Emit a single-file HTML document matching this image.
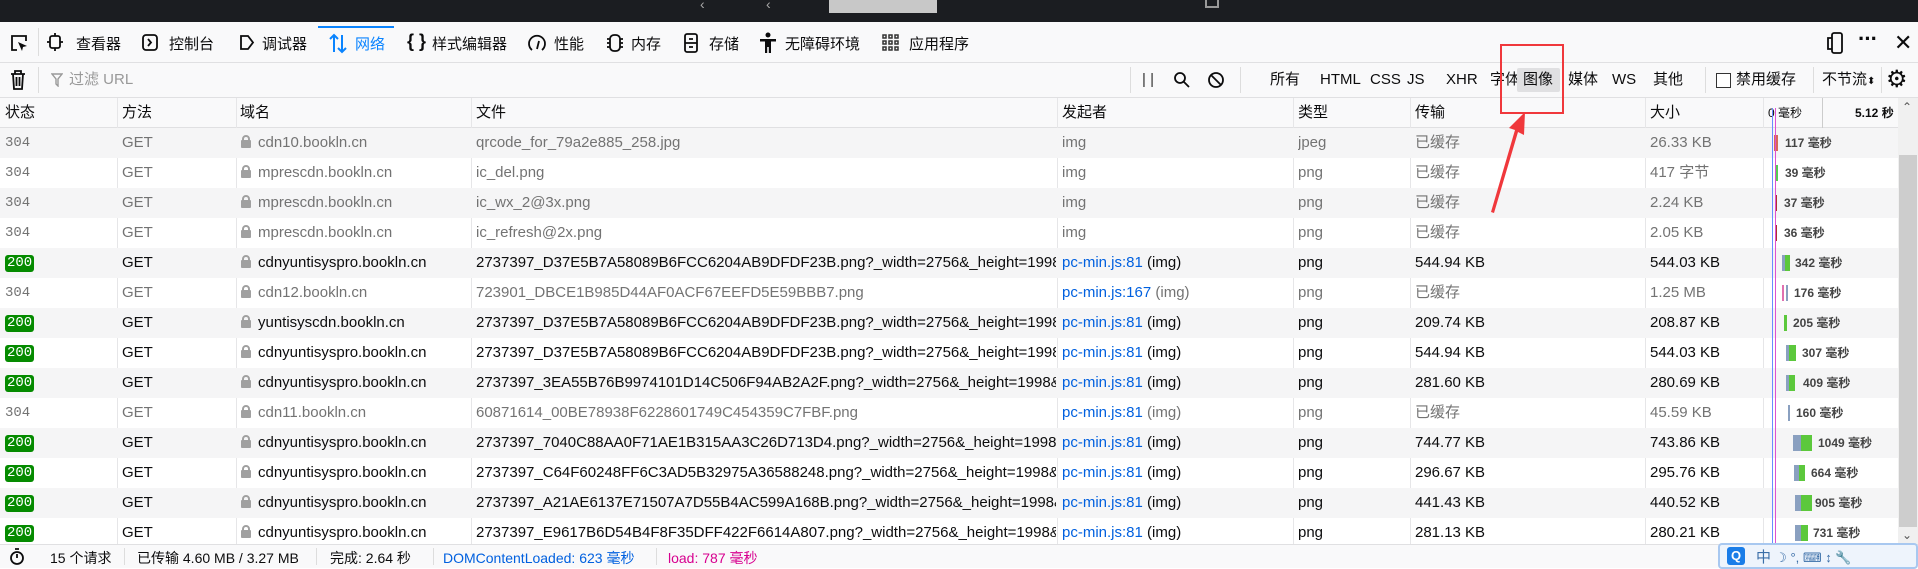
<!DOCTYPE html>
<html><head><meta charset="utf-8"><style>
*{box-sizing:border-box;margin:0;padding:0}
body{width:1918px;height:568px;overflow:hidden;background:#fff;font-family:"Liberation Sans","Noto Sans CJK SC",sans-serif;font-size:15px;color:#0c0c0d;position:relative}
.abs{position:absolute;white-space:nowrap}
#top{position:absolute;left:0;top:0;width:1918px;height:22px;background:#1b1d21}
#tb{position:absolute;top:22px;left:0;width:1918px;height:41px;background:#f9f9fa;border-bottom:1px solid #e0e0e2}
#fr{position:absolute;top:63px;left:0;width:1918px;height:35px;background:#f9f9fa;border-bottom:1px solid #e0e0e2}
#fr .t{top:7px;line-height:20px}
#hd{position:absolute;top:98px;left:0;width:1898px;height:30px;background:#f9f9fa;border-bottom:1px solid #e0e0e2}
.row{position:absolute;left:0;width:1898px;height:30px}
.row:nth-child(odd){background:#f5f5f6}
.c{position:absolute;top:0;height:30px;line-height:30px;white-space:nowrap;overflow:hidden}
.g{color:#737373}
.b200{display:inline-block;background:#058b00;color:#fff;font-family:"Liberation Mono",monospace;font-size:14px;line-height:17px;padding:0 2px;border-radius:3px;vertical-align:middle}
.vl{position:absolute;top:98px;height:446px;width:1px;background:#e6e6e8}
.lock{display:inline-block;width:10px;height:13px;position:relative;margin-right:7px;vertical-align:-1px}
.lock:before{content:"";position:absolute;left:1px;top:0;width:8px;height:9px;border:2px solid #a0a0a0;border-radius:4px 4px 0 0;box-sizing:border-box}
.lock:after{content:"";position:absolute;left:0;top:5px;width:10px;height:8px;background:#a0a0a0;border-radius:1px}
.bar{position:absolute;top:7px;height:16px}
.wl{position:absolute;font-size:12px;font-weight:bold;color:#444;line-height:30px}
.ic{stroke:#0c0c0d;fill:none;stroke-width:1.8}
#sb{position:absolute;top:544px;left:0;width:1918px;height:24px;background:#f9f9fa;border-top:1px solid #e0e0e2;font-size:14px}
</style></head><body>
<div id="top">
 <div class="abs" style="left:829px;top:0;width:108px;height:13px;background:#c8c8c8"></div>
 <div class="abs" style="left:700px;top:0;color:#aaa;font-size:14px;line-height:8px">‹</div>
 <div class="abs" style="left:766px;top:0;color:#aaa;font-size:14px;line-height:8px">‹</div>
 <div class="abs" style="left:1205px;top:0;width:14px;height:8px;border:2px solid #999;border-top:0"></div>
</div>
<div id="tb">
 <div class="abs" style="left:318px;top:4px;width:76px;height:2px;background:#0a84ff"></div>
 <svg class="abs" style="left:10px;top:12px" width="18" height="18"><path class="ic" d="M7 16H2V2h14v5"/><path d="M8 8l9 4-4 1-1 4z" fill="#0c0c0d"/></svg>
 <div class="abs" style="left:38px;top:6px;width:1px;height:28px;background:#ddd"></div>
 <svg class="abs" style="left:47px;top:11px" width="16" height="18"><rect class="ic" x="3" y="3" width="10" height="12" rx="2"/><path class="ic" d="M8 0v3M8 15v3M0 9h3M13 9h3"/></svg>
 <div class="abs" style="left:76px;top:11px">查看器</div>
 <svg class="abs" style="left:142px;top:12px" width="16" height="17"><rect class="ic" x="1" y="1" width="14" height="15" rx="3"/><path class="ic" d="M6 5l3 3.5L6 12"/></svg>
 <div class="abs" style="left:169px;top:11px">控制台</div>
 <svg class="abs" style="left:239px;top:12px" width="16" height="17"><path class="ic" d="M2 2h7l5 6.5L9 15H2z"/></svg>
 <div class="abs" style="left:262px;top:11px">调试器</div>
 <svg class="abs" style="left:327px;top:10px" width="22" height="22"><path d="M7 20V3M3 7l4-4 4 4M15 3v17M11 16l4 4 4-4" stroke="#0a84ff" stroke-width="2" fill="none"/></svg>
 <div class="abs" style="left:355px;top:11px;color:#0a84ff">网络</div>
 <div class="abs" style="left:407px;top:9px;font-size:18px;font-weight:bold">{ }</div>
 <div class="abs" style="left:432px;top:11px">样式编辑器</div>
 <svg class="abs" style="left:527px;top:11px" width="20" height="20"><path class="ic" d="M5 17A8 8 0 1 1 15 17"/><path class="ic" d="M10 16l2-8"/></svg>
 <div class="abs" style="left:554px;top:11px">性能</div>
 <svg class="abs" style="left:605px;top:11px" width="20" height="20"><rect class="ic" x="5" y="2" width="10" height="16" rx="4"/><path class="ic" d="M2 6h3M2 10h3M2 14h3M15 6h3M15 10h3M15 14h3"/></svg>
 <div class="abs" style="left:631px;top:11px">内存</div>
 <svg class="abs" style="left:683px;top:11px" width="16" height="20"><rect class="ic" x="2" y="1" width="12" height="18" rx="2"/><path class="ic" d="M2 10h12M6 6h4M6 14h4"/></svg>
 <div class="abs" style="left:709px;top:11px">存储</div>
 <svg class="abs" style="left:759px;top:10px" width="18" height="22"><circle cx="9" cy="3" r="2.5" fill="#0c0c0d"/><path d="M1 7h16v2.5h-5V21H9.8v-6h-1.6v6H6V9.5H1z" fill="#0c0c0d"/></svg>
 <div class="abs" style="left:785px;top:11px">无障碍环境</div>
 <svg class="abs" style="left:882px;top:12px" width="18" height="18"><g fill="none" stroke="#333" stroke-width="1.5"><rect x="1" y="1" width="3" height="3"/><rect x="7" y="1" width="3" height="3"/><rect x="13" y="1" width="3" height="3"/><rect x="1" y="7" width="3" height="3"/><rect x="7" y="7" width="3" height="3"/><rect x="13" y="7" width="3" height="3"/><rect x="1" y="13" width="3" height="3"/><rect x="7" y="13" width="3" height="3"/><rect x="13" y="13" width="3" height="3"/></g></svg>
 <div class="abs" style="left:909px;top:11px">应用程序</div>
 <svg class="abs" style="left:1827px;top:10px" width="16" height="22"><rect class="ic" x="5" y="1" width="10" height="20" rx="2"/><path class="ic" d="M5 6H1v11h4"/></svg>
 <div class="abs" style="left:1858px;top:4px;font-size:22px;font-weight:bold;letter-spacing:-1px">···</div>
 <div class="abs" style="left:1894px;top:8px;font-size:22px">✕</div>
</div>
<div id="fr">
 <svg class="abs" style="left:10px;top:7px" width="16" height="20"><path class="ic" d="M1 4h14M5 4V1h6v3M3 4l1 15h8l1-15M6.5 7v9M9.5 7v9"/></svg>
 <div class="abs" style="left:38px;top:4px;width:1px;height:26px;background:#ddd"></div>
 <svg class="abs" style="left:51px;top:10px" width="12" height="14"><path d="M1 1h10L7 6v7L5 11V6z" fill="none" stroke="#999" stroke-width="1.4"/></svg>
 <div class="abs t" style="left:69px;color:#999">过滤 URL</div>
 <div class="abs" style="left:1130px;top:4px;width:1px;height:26px;background:#ddd"></div>
 <div class="abs t" style="left:1142px;color:#333">| |</div>
 <svg class="abs" style="left:1173px;top:8px" width="18" height="18"><circle class="ic" cx="7" cy="7" r="5"/><path class="ic" d="M11 11l5 5" stroke-width="2.4"/></svg>
 <svg class="abs" style="left:1207px;top:8px" width="18" height="18"><circle class="ic" cx="9" cy="9" r="7" stroke-width="2.4"/><path class="ic" d="M4 4l10 10" stroke-width="2.4"/></svg>
 <div class="abs" style="left:1240px;top:4px;width:1px;height:26px;background:#ddd"></div>
 <div class="abs t" style="left:1270px">所有</div>
 <div class="abs t" style="left:1320px">HTML</div>
 <div class="abs t" style="left:1370px">CSS</div>
 <div class="abs t" style="left:1407px">JS</div>
 <div class="abs t" style="left:1446px">XHR</div>
 <div class="abs t" style="left:1490px">字体</div>
 <div class="abs" style="left:1517px;top:5px;width:43px;height:24px;background:#e0e0e2;border-radius:2px"></div>
 <div class="abs t" style="left:1523px">图像</div>
 <div class="abs t" style="left:1568px">媒体</div>
 <div class="abs t" style="left:1612px">WS</div>
 <div class="abs t" style="left:1653px">其他</div>
 <div class="abs" style="left:1705px;top:4px;width:1px;height:26px;background:#ddd"></div>
 <div class="abs" style="left:1716px;top:10px;width:15px;height:15px;border:1px solid #333;background:#fff"></div>
 <div class="abs t" style="left:1736px">禁用缓存</div>
 <div class="abs" style="left:1813px;top:4px;width:1px;height:26px;background:#ddd"></div>
 <div class="abs t" style="left:1822px">不节流<span style="font-size:10px">⬍</span></div>
 <div class="abs" style="left:1881px;top:4px;width:1px;height:26px;background:#ddd"></div>
 <div class="abs" style="left:1886px;top:2px;font-size:24px">⚙</div>
</div>
<div id="hd">
 <div class="c" style="left:5px">状态</div>
 <div class="c" style="left:122px">方法</div>
 <div class="c" style="left:240px">域名</div>
 <div class="c" style="left:476px">文件</div>
 <div class="c" style="left:1062px">发起者</div>
 <div class="c" style="left:1298px">类型</div>
 <div class="c" style="left:1415px">传输</div>
 <div class="c" style="left:1650px">大小</div>
 <div class="c" style="left:1768px;font-size:12px">0 毫秒</div>
 <div class="c" style="left:1855px;font-size:12px;font-weight:bold">5.12 秒</div>
</div>
<div class="vl" style="left:117px"></div><div class="vl" style="left:236px"></div><div class="vl" style="left:471px"></div><div class="vl" style="left:1057px"></div><div class="vl" style="left:1293px"></div><div class="vl" style="left:1410px"></div><div class="vl" style="left:1645px"></div><div class="vl" style="left:1763px"></div>
<div class="vl" style="left:1822px;height:30px;background:#ccc"></div>
<div id="rows" style="position:absolute;left:0;top:0">
<div class="row g" style="top:128px"><div class="c" style="left:5px;font-family:'Liberation Mono',monospace;font-size:14px">304</div><div class="c" style="left:122px">GET</div><div class="c" style="left:241px;width:228px"><span class="lock"></span>cdn10.bookln.cn</div><div class="c" style="left:476px;width:578px">qrcode_for_79a2e885_258.jpg</div><div class="c" style="left:1062px">img</div><div class="c" style="left:1298px">jpeg</div><div class="c" style="left:1415px">已缓存</div><div class="c" style="left:1650px">26.33 KB</div><div class="bar" style="left:1774px;width:4px;background:#d7695a"></div><div class="wl" style="left:1785px">117 毫秒</div></div>
<div class="row g" style="top:158px"><div class="c" style="left:5px;font-family:'Liberation Mono',monospace;font-size:14px">304</div><div class="c" style="left:122px">GET</div><div class="c" style="left:241px"><span class="lock"></span>mprescdn.bookln.cn</div><div class="c" style="left:476px">ic_del.png</div><div class="c" style="left:1062px">img</div><div class="c" style="left:1298px">png</div><div class="c" style="left:1415px">已缓存</div><div class="c" style="left:1650px">417 字节</div><div class="bar" style="left:1776px;width:2px;background:#5c5"></div><div class="wl" style="left:1785px">39 毫秒</div></div>
<div class="row g" style="top:188px"><div class="c" style="left:5px;font-family:'Liberation Mono',monospace;font-size:14px">304</div><div class="c" style="left:122px">GET</div><div class="c" style="left:241px"><span class="lock"></span>mprescdn.bookln.cn</div><div class="c" style="left:476px">ic_wx_2@3x.png</div><div class="c" style="left:1062px">img</div><div class="c" style="left:1298px">png</div><div class="c" style="left:1415px">已缓存</div><div class="c" style="left:1650px">2.24 KB</div><div class="bar" style="left:1776px;width:1px;background:#a33"></div><div class="wl" style="left:1784px">37 毫秒</div></div>
<div class="row g" style="top:218px"><div class="c" style="left:5px;font-family:'Liberation Mono',monospace;font-size:14px">304</div><div class="c" style="left:122px">GET</div><div class="c" style="left:241px"><span class="lock"></span>mprescdn.bookln.cn</div><div class="c" style="left:476px">ic_refresh@2x.png</div><div class="c" style="left:1062px">img</div><div class="c" style="left:1298px">png</div><div class="c" style="left:1415px">已缓存</div><div class="c" style="left:1650px">2.05 KB</div><div class="bar" style="left:1776px;width:1px;background:#a33"></div><div class="wl" style="left:1784px">36 毫秒</div></div>
<div class="row" style="top:248px"><div class="c" style="left:5px"><span class="b200">200</span></div><div class="c" style="left:122px">GET</div><div class="c" style="left:241px"><span class="lock"></span>cdnyuntisyspro.bookln.cn</div><div class="c" style="left:476px;width:580px">2737397_D37E5B7A58089B6FCC6204AB9DFDF23B.png?_width=2756&amp;_height=1998&amp;auth</div><div class="c" style="left:1062px"><span style="color:#0060df">pc-min.js:81</span> (img)</div><div class="c" style="left:1298px">png</div><div class="c" style="left:1415px">544.94 KB</div><div class="c" style="left:1650px">544.03 KB</div><div class="bar" style="left:1782px;width:3px;background:#8aa0c0"></div><div class="bar" style="left:1785px;width:5px;background:#5cc83c"></div><div class="wl" style="left:1795px">342 毫秒</div></div>
<div class="row g" style="top:278px"><div class="c" style="left:5px;font-family:'Liberation Mono',monospace;font-size:14px">304</div><div class="c" style="left:122px">GET</div><div class="c" style="left:241px"><span class="lock"></span>cdn12.bookln.cn</div><div class="c" style="left:476px">723901_DBCE1B985D44AF0ACF67EEFD5E59BBB7.png</div><div class="c" style="left:1062px"><span style="color:#0060df">pc-min.js:167</span> (img)</div><div class="c" style="left:1298px">png</div><div class="c" style="left:1415px">已缓存</div><div class="c" style="left:1650px">1.25 MB</div><div class="bar" style="left:1782px;width:2px;background:#e070b0"></div><div class="bar" style="left:1786px;width:2px;background:#8aa0c0"></div><div class="wl" style="left:1794px">176 毫秒</div></div>
<div class="row" style="top:308px"><div class="c" style="left:5px"><span class="b200">200</span></div><div class="c" style="left:122px">GET</div><div class="c" style="left:241px"><span class="lock"></span>yuntisyscdn.bookln.cn</div><div class="c" style="left:476px;width:580px">2737397_D37E5B7A58089B6FCC6204AB9DFDF23B.png?_width=2756&amp;_height=1998&amp;x-oss</div><div class="c" style="left:1062px"><span style="color:#0060df">pc-min.js:81</span> (img)</div><div class="c" style="left:1298px">png</div><div class="c" style="left:1415px">209.74 KB</div><div class="c" style="left:1650px">208.87 KB</div><div class="bar" style="left:1784px;width:3px;background:#5cc83c"></div><div class="wl" style="left:1793px">205 毫秒</div></div>
<div class="row" style="top:338px"><div class="c" style="left:5px"><span class="b200">200</span></div><div class="c" style="left:122px">GET</div><div class="c" style="left:241px"><span class="lock"></span>cdnyuntisyspro.bookln.cn</div><div class="c" style="left:476px;width:580px">2737397_D37E5B7A58089B6FCC6204AB9DFDF23B.png?_width=2756&amp;_height=1998&amp;auth</div><div class="c" style="left:1062px"><span style="color:#0060df">pc-min.js:81</span> (img)</div><div class="c" style="left:1298px">png</div><div class="c" style="left:1415px">544.94 KB</div><div class="c" style="left:1650px">544.03 KB</div><div class="bar" style="left:1786px;width:3px;background:#8aa0c0"></div><div class="bar" style="left:1789px;width:7px;background:#5cc83c"></div><div class="wl" style="left:1802px">307 毫秒</div></div>
<div class="row" style="top:368px"><div class="c" style="left:5px"><span class="b200">200</span></div><div class="c" style="left:122px">GET</div><div class="c" style="left:241px"><span class="lock"></span>cdnyuntisyspro.bookln.cn</div><div class="c" style="left:476px;width:580px">2737397_3EA55B76B9974101D14C506F94AB2A2F.png?_width=2756&amp;_height=1998&amp;auth</div><div class="c" style="left:1062px"><span style="color:#0060df">pc-min.js:81</span> (img)</div><div class="c" style="left:1298px">png</div><div class="c" style="left:1415px">281.60 KB</div><div class="c" style="left:1650px">280.69 KB</div><div class="bar" style="left:1786px;width:3px;background:#8aa0c0"></div><div class="bar" style="left:1789px;width:6px;background:#5cc83c"></div><div class="wl" style="left:1803px">409 毫秒</div></div>
<div class="row g" style="top:398px"><div class="c" style="left:5px;font-family:'Liberation Mono',monospace;font-size:14px">304</div><div class="c" style="left:122px">GET</div><div class="c" style="left:241px"><span class="lock"></span>cdn11.bookln.cn</div><div class="c" style="left:476px">60871614_00BE78938F6228601749C454359C7FBF.png</div><div class="c" style="left:1062px"><span style="color:#0060df">pc-min.js:81</span> (img)</div><div class="c" style="left:1298px">png</div><div class="c" style="left:1415px">已缓存</div><div class="c" style="left:1650px">45.59 KB</div><div class="bar" style="left:1788px;width:2px;background:#8aa0c0"></div><div class="wl" style="left:1796px">160 毫秒</div></div>
<div class="row" style="top:428px"><div class="c" style="left:5px"><span class="b200">200</span></div><div class="c" style="left:122px">GET</div><div class="c" style="left:241px"><span class="lock"></span>cdnyuntisyspro.bookln.cn</div><div class="c" style="left:476px;width:580px">2737397_7040C88AA0F71AE1B315AA3C26D713D4.png?_width=2756&amp;_height=1998&amp;auth</div><div class="c" style="left:1062px"><span style="color:#0060df">pc-min.js:81</span> (img)</div><div class="c" style="left:1298px">png</div><div class="c" style="left:1415px">744.77 KB</div><div class="c" style="left:1650px">743.86 KB</div><div class="bar" style="left:1793px;width:8px;background:#8aa0c0"></div><div class="bar" style="left:1801px;width:11px;background:#5cc83c"></div><div class="wl" style="left:1818px">1049 毫秒</div></div>
<div class="row" style="top:458px"><div class="c" style="left:5px"><span class="b200">200</span></div><div class="c" style="left:122px">GET</div><div class="c" style="left:241px"><span class="lock"></span>cdnyuntisyspro.bookln.cn</div><div class="c" style="left:476px;width:580px">2737397_C64F60248FF6C3AD5B32975A36588248.png?_width=2756&amp;_height=1998&amp;auth</div><div class="c" style="left:1062px"><span style="color:#0060df">pc-min.js:81</span> (img)</div><div class="c" style="left:1298px">png</div><div class="c" style="left:1415px">296.67 KB</div><div class="c" style="left:1650px">295.76 KB</div><div class="bar" style="left:1794px;width:5px;background:#8aa0c0"></div><div class="bar" style="left:1799px;width:6px;background:#5cc83c"></div><div class="wl" style="left:1811px">664 毫秒</div></div>
<div class="row" style="top:488px"><div class="c" style="left:5px"><span class="b200">200</span></div><div class="c" style="left:122px">GET</div><div class="c" style="left:241px"><span class="lock"></span>cdnyuntisyspro.bookln.cn</div><div class="c" style="left:476px;width:580px">2737397_A21AE6137E71507A7D55B4AC599A168B.png?_width=2756&amp;_height=1998&amp;auth</div><div class="c" style="left:1062px"><span style="color:#0060df">pc-min.js:81</span> (img)</div><div class="c" style="left:1298px">png</div><div class="c" style="left:1415px">441.43 KB</div><div class="c" style="left:1650px">440.52 KB</div><div class="bar" style="left:1795px;width:6px;background:#8aa0c0"></div><div class="bar" style="left:1801px;width:11px;background:#5cc83c"></div><div class="wl" style="left:1815px">905 毫秒</div></div>
<div class="row" style="top:518px"><div class="c" style="left:5px"><span class="b200">200</span></div><div class="c" style="left:122px">GET</div><div class="c" style="left:241px"><span class="lock"></span>cdnyuntisyspro.bookln.cn</div><div class="c" style="left:476px;width:580px">2737397_E9617B6D54B4F8F35DFF422F6614A807.png?_width=2756&amp;_height=1998&amp;auth</div><div class="c" style="left:1062px"><span style="color:#0060df">pc-min.js:81</span> (img)</div><div class="c" style="left:1298px">png</div><div class="c" style="left:1415px">281.13 KB</div><div class="c" style="left:1650px">280.21 KB</div><div class="bar" style="left:1795px;width:6px;background:#8aa0c0"></div><div class="bar" style="left:1801px;width:7px;background:#5cc83c"></div><div class="wl" style="left:1813px">731 毫秒</div></div>
</div>
<div class="abs" style="left:1772px;top:108px;width:1px;height:436px;background:#6a8cff"></div>
<div class="abs" style="left:1775px;top:108px;width:1px;height:436px;background:#e050d0"></div>
<div class="abs" style="left:1898px;top:98px;width:20px;height:446px;background:#f0f0f0"></div>
<div class="abs" style="left:1899px;top:155px;width:18px;height:372px;background:#cdcdcd"></div>
<div class="abs" style="left:1902px;top:100px;font-size:12px;color:#555">⌃</div>
<div class="abs" style="left:1902px;top:528px;font-size:12px;color:#555">⌄</div>
<div id="sb">
 <svg class="abs" style="left:9px;top:3px" width="16" height="18"><circle class="ic" cx="8" cy="10" r="6"/><path class="ic" d="M6 1h4M8 10V6"/></svg>
 <div class="abs" style="left:50px;top:3px">15 个请求</div>
 <div class="abs" style="left:124px;top:3px;width:1px;height:17px;background:#ddd"></div>
 <div class="abs" style="left:137px;top:3px">已传输 4.60 MB / 3.27 MB</div>
 <div class="abs" style="left:316px;top:3px;width:1px;height:17px;background:#ddd"></div>
 <div class="abs" style="left:330px;top:3px">完成: 2.64 秒</div>
 <div class="abs" style="left:433px;top:3px;width:1px;height:17px;background:#ddd"></div>
 <div class="abs" style="left:443px;top:3px;color:#0060df">DOMContentLoaded: 623 毫秒</div>
 <div class="abs" style="left:656px;top:3px;width:1px;height:17px;background:#ddd"></div>
 <div class="abs" style="left:668px;top:3px;color:#d7008f">load: 787 毫秒</div>
 <div class="abs" style="left:1718px;top:-2px;width:200px;height:26px;background:#eef4fc;border:2px solid #a8c8f0;border-radius:4px">
  <div class="abs" style="left:7px;top:2px;width:18px;height:18px;background:#1a7de8;border-radius:3px;color:#fff;font-weight:bold;font-size:13px;text-align:center;line-height:18px">Q</div>
  <div class="abs" style="left:36px;top:1px;color:#3a6ea8;font-size:15px">中 <span style="font-size:13px">☽ °, ⌨ ↕ 🔧</span></div>
 </div>
</div>
<div class="abs" style="left:1500px;top:44px;width:64px;height:70px;border:2px solid #f0383c"></div>
<svg class="abs" style="left:1485px;top:110px" width="50" height="105"><path d="M6 102L30 20 24 18 40 2 39 25 33 22 9 103z" fill="#f0383c"/></svg>
</body></html>
